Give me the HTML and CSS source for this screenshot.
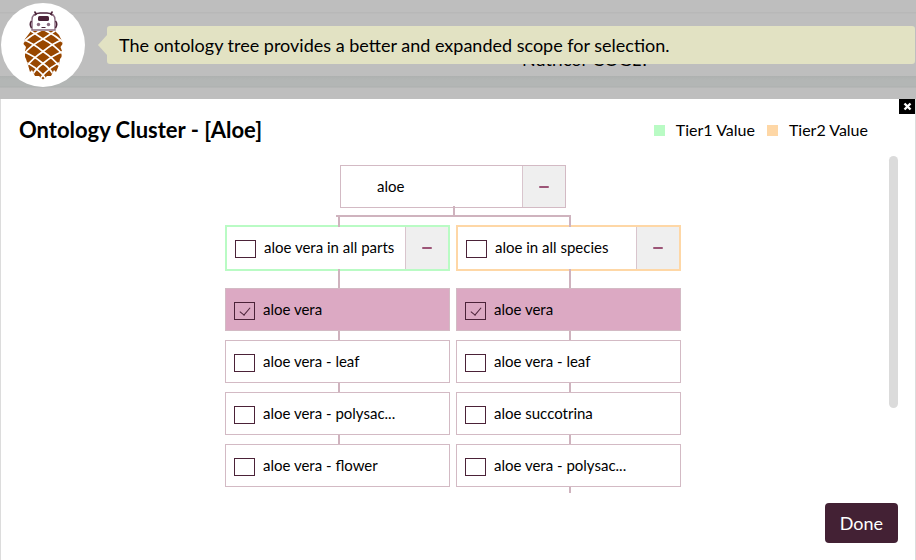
FILE: index.html
```html
<!DOCTYPE html>
<html lang="en">
<head>
  <meta charset="UTF-8">
  <meta name="viewport" content="width=device-width, initial-scale=1">
  <title>Ontology Cluster</title>
  <link rel="stylesheet" href="styles.css">
</head>
<body>
  <header class="topbar">
    <p class="page-name">Nutricor COGL?</p>
    <div class="mascot">
      <svg width="42" height="72" viewBox="0 0 42 72" aria-hidden="true">
        <!-- head -->
        <g fill="none" stroke="#4b2238">
          <path d="M10 21 V11 Q10 4 18 4 H25 Q33 4 33 11 V21 Z" stroke="#8a6c80" stroke-width="1.4"/>
          <path d="M14.500 5.500 L12.500 2.500 M28.500 5.500 L30.500 2.500 M9.500 12 Q7 15 9.500 19 M33.500 12 Q36 15 33.500 19" stroke-width="1.5"/>
          <path d="M12.500 6.500 Q15 4 18 4 H25 Q28 4 30.500 6.500" stroke-width="1.2"/>
          <path d="M19.500 18.500 H23.500" stroke-width="1"/>
        </g>
        <rect x="16" y="7" width="11" height="5" rx="1.500" fill="#4b2238"/>
        <circle cx="16.500" cy="15.500" r="1.700" fill="#8a6c80"/>
        <circle cx="26.500" cy="15.500" r="1.700" fill="#8a6c80"/>
        <!-- pinecone scales -->
        <clipPath id="cone"><path d="M9 22 H33 L37 26 L40 32 L40.500 35 L38.500 38 L40 42 L39.500 48 L38 50 L37 56 L34 63 L32 61 L29 67 L25 67 L21 70.500 L17 67 L13 67 L10 61 L8 63 L6 56 L4 50 L3 48 L3 42 L4 38 L1.500 35 L3 30 Z"/></clipPath>
        <g clip-path="url(#cone)">
          <rect width="42" height="72" fill="#984700"/>
          <g fill="none" stroke="#fff" stroke-width="1.700">
            <path d="M6 20 L21 30 Q33 36 42 47"/>
            <path d="M0 30 Q11 34 21 42.500 Q31 49 40 60"/>
            <path d="M0 42 Q11 46 21 54.500 Q29 60 34 70"/>
            <path d="M0 52 Q14 56 25 71"/>
            <path d="M20 20 Q32 25 42 34"/>
            <path d="M36 20 L21 30 Q9 36 0 47"/>
            <path d="M42 30 Q31 34 21 42.500 Q11 49 2 60"/>
            <path d="M42 42 Q31 46 21 54.500 Q13 60 8 70"/>
            <path d="M42 52 Q28 56 17 71"/>
            <path d="M22 20 Q10 25 0 34"/>
          </g>
        </g>
      </svg>
    </div>
    <p class="bubble">The ontology tree provides a better and expanded scope for selection.</p>
  </header>

  <main class="dialog">
    <button class="close" aria-label="Close">
      <svg width="9" height="9" viewBox="0 0 9 9" aria-hidden="true"><path d="M1.500 1.500 L7.500 7.500 M7.500 1.500 L1.500 7.500" stroke="#fff" stroke-width="2.400"/></svg>
    </button>

    <div class="dialog-head">
      <h1>Ontology Cluster - [Aloe]</h1>
      <ul class="legend">
        <li class="tier1">Tier1 Value</li>
        <li class="tier2">Tier2 Value</li>
      </ul>
    </div>

    <div class="scroll-area">
      <div class="tree">
        <div class="node root">
          <span class="name">aloe</span>
          <button class="toggle" aria-label="Collapse aloe"></button>
        </div>
        <div class="branches">
          <div class="branch">
            <div class="node parent tier1">
              <label><input type="checkbox"><span>aloe vera in all parts</span></label>
              <button class="toggle" aria-label="Collapse aloe vera in all parts"></button>
            </div>
            <ul class="leaves">
              <li class="node selected"><label><input type="checkbox" checked><span>aloe vera</span></label></li>
              <li class="node"><label><input type="checkbox"><span>aloe vera - leaf</span></label></li>
              <li class="node"><label><input type="checkbox"><span>aloe vera - polysac...</span></label></li>
              <li class="node"><label><input type="checkbox"><span>aloe vera - flower</span></label></li>
            </ul>
          </div>
          <div class="branch more">
            <div class="node parent tier2">
              <label><input type="checkbox"><span>aloe in all species</span></label>
              <button class="toggle" aria-label="Collapse aloe in all species"></button>
            </div>
            <ul class="leaves">
              <li class="node selected"><label><input type="checkbox" checked><span>aloe vera</span></label></li>
              <li class="node"><label><input type="checkbox"><span>aloe vera - leaf</span></label></li>
              <li class="node"><label><input type="checkbox"><span>aloe succotrina</span></label></li>
              <li class="node"><label><input type="checkbox"><span>aloe vera - polysac...</span></label></li>
            </ul>
          </div>
        </div>
      </div>
      <div class="scrollbar"><div class="thumb"></div></div>
    </div>

    <div class="dialog-foot">
      <button class="done">Done</button>
    </div>
  </main>
</body>
</html>
```
FILE: styles.css
```css
* { box-sizing: border-box; }
body {
  margin: 0;
  min-height: 100vh;
  display: flex;
  flex-direction: column;
  font-family: Lato, sans-serif;
  font-size: 15px;
  color: #000;
  background: #bebebe;
}
h1, p, ul { margin: 0; padding: 0; }
ul { list-style: none; }
button { border: none; padding: 0; font-family: inherit; cursor: pointer; }

/* top bar */
.topbar {
  position: relative;
  display: flex;
  align-items: center;
  height: 99px;
  padding: 0 1px 9px 1px;
  background: linear-gradient(#bebebe 12px, #b8b8b8 12px, #b8b8b8 13px, #bebebe 14px, #bebebe 76px, #aeb1b0 76px, #b3b6b5 80px, #b3b6b5 86px, #adb0af 87px, #bebebe 88px);
}
/* sits behind the bubble, only its lower edge shows */
.page-name {
  position: absolute;
  left: 522px;
  top: 48px;
  font-size: 18px;
  line-height: 22px;
}
.mascot {
  display: flex;
  align-items: center;
  justify-content: center;
  width: 84px;
  height: 84px;
  border-radius: 50%;
  background: #fff;
}
.bubble {
  position: relative;
  flex: 1;
  margin-left: 22px;
  padding: 1px 12px 0;
  border-radius: 3px;
  font-size: 18px;
  line-height: 37px;
  background: #e2e2c3;
}
.bubble::before {
  content: "";
  position: absolute;
  left: -9px;
  top: 9px;
  border: solid transparent;
  border-width: 10px 9px 10px 0;
  border-right-color: #e2e2c3;
}

/* dialog */
.dialog {
  position: relative;
  flex: 1;
  display: flex;
  flex-direction: column;
  border: solid #dcdcdc;
  border-width: 0 1px;
  background: #fff;
}
.close {
  position: absolute;
  right: 0;
  top: 0;
  display: flex;
  align-items: center;
  justify-content: center;
  width: 16px;
  height: 15px;
  background: #000;
}
.dialog-head {
  display: flex;
  justify-content: space-between;
  align-items: center;
  padding: 19px 47px 0 18px;
}
.dialog-head h1 { font-size: 22px; line-height: 24px; }
.legend { display: flex; gap: 12px; font-size: 16px; line-height: 24px; }
.legend li { display: flex; align-items: center; gap: 11px; }
.legend li::before { content: ""; width: 11px; height: 11px; }
.legend .tier1::before { background: #b9fbc4; }
.legend .tier2::before { background: #fed7a6; }

.scroll-area {
  display: flex;
  padding: 14px 17px 0 16px;
}
.tree { flex: 1; padding-top: 9px; }
.scrollbar { width: 9px; }
.thumb { height: 252px; border-radius: 5px; background: #dbdbdb; }

/* tree nodes */
.node {
  position: relative;
  display: flex;
  height: 43px;
  border: 1px solid #d3bac4;
  background: #fff;
}
.node label {
  flex: 1;
  display: flex;
  gap: 8px;
  padding: 10px 0 0 8px;
  line-height: 20px;
}
.root { width: 226px; margin: 0 auto; }
.root .name { flex: 1; padding-left: 36px; line-height: 41px; }
.toggle {
  display: flex;
  align-items: center;
  justify-content: center;
  width: 43px;
  border-left: 1px solid #d9c5cd;
  background: #efefef;
}
.toggle::before { content: ""; width: 10px; height: 2px; border-radius: 1px; background: #9c5577; }

.branches {
  position: relative;
  display: grid;
  grid-template-columns: 225px 225px;
  justify-content: center;
  gap: 6px;
  padding-top: 17px;
}
.parent { height: 46px; border-width: 2px; }
.parent.tier1 { border-color: #b9fbc4; }
.parent.tier2 { border-color: #fed7a6; }
.leaves {
  display: flex;
  flex-direction: column;
  gap: 9px;
  padding-top: 17px;
}
.selected { background: #dca9c3; }

/* connectors */
.root::after,
.parent::before,
.leaves .node::before,
.more .node:last-child::after {
  content: "";
  position: absolute;
  left: 50%;
  width: 2px;
  background: #cfb3be;
}
.root::after { top: 40px; height: 10px; }
.parent::before { top: -10px; height: 10px; }
.leaves .node::before { top: -10px; height: 9px; }
.leaves .node:first-child::before { top: -20px; height: 19px; }
.more .node:last-child::after { top: 42px; height: 6px; }
.branches::before {
  content: "";
  position: absolute;
  left: calc(50% - 117px);
  top: 7px;
  width: 235px;
  height: 2px;
  background: #cfb3be;
}

/* checkboxes */
input[type="checkbox"] {
  appearance: none;
  display: flex;
  justify-content: center;
  width: 21px;
  height: 18px;
  margin: 3px 0 0;
  border: 1px solid #4b2238;
}
input[type="checkbox"]:checked::before {
  content: "";
  width: 5px;
  height: 9px;
  margin-top: 2px;
  border: solid #4b2238;
  border-width: 0 1px 1px 0;
  transform: rotate(40deg);
}

.dialog-foot {
  display: flex;
  justify-content: flex-end;
  margin-top: auto;
  padding: 0 17px 17px;
}
.done {
  padding: 0 15px;
  border-radius: 4px;
  font-size: 18px;
  line-height: 40px;
  color: #fff;
  background: #432134;
}
```
